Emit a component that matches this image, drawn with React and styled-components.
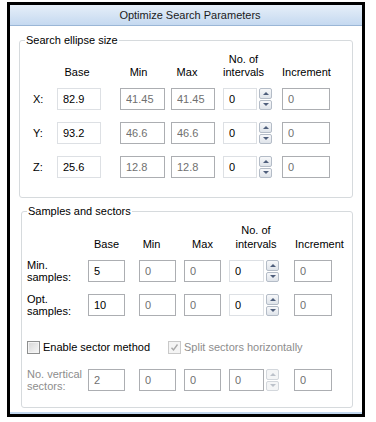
import React from 'react';
import styled, { createGlobalStyle } from 'styled-components';

const GlobalStyle = createGlobalStyle`
  html, body {
    margin: 0;
    padding: 0;
    background: #fff;
  }
  body {
    font-family: 'Liberation Sans', Arial, sans-serif;
    font-size: 11px;
    color: #000;
  }
`;

const Window = styled.div`
  width: 352px;
  margin: 2px 0 0 7px;
  border: 3px solid #000;
  background: #fff;
`;

const TitleBar = styled.div`
  height: 20px;
  display: flex;
  align-items: center;
  justify-content: center;
  padding-left: 8px;
  background: linear-gradient(to bottom, #e6eff9, #c5d9f0);
  border-bottom: 1px solid #9ab6d6;
  color: #1b1b1b;
  font-size: 11px;
`;

const Body = styled.div`
  padding: 8px 9px 4px 9px;
  border-bottom: 2px solid #c2d8f0;
`;

const Group = styled.fieldset`
  margin: ${p => p.$top}px 0 0 ${p => p.$left}px;
  padding: ${p => p.$pt}px 0 ${p => p.$pb}px ${p => p.$pl}px;
  border: 1px solid #d6dadd;
  border-radius: 3px;
  min-width: 0;
`;

const Legend = styled.legend`
  margin-left: ${p => p.$shift}px;
  padding: 0 1px;
  line-height: 13px;
  color: #000;
`;

const Grid = styled.div`
  display: grid;
  grid-template-columns: ${p => p.$cols};
  grid-template-rows: ${p => p.$rows};
  align-items: end;
  justify-items: end;
`;

const Header = styled.div`
  width: ${p => p.$w}px;
  text-align: center;
  line-height: ${p => p.$lh}px;
  margin-right: ${p => p.$shift || 0}px;
`;

const RowLabel = styled.div`
  justify-self: start;
  line-height: 12px;
  margin-bottom: ${p => (p.$two ? -1 : 5)}px;
  color: ${p => (p.$dim ? '#8d8d8d' : '#000')};
`;

const Field = styled.input`
  box-sizing: border-box;
  width: ${p => p.$w}px;
  height: 22px;
  margin: 0;
  padding: 0 0 0 5px;
  border: 1px solid ${p => (p.$light ? '#dde0e4' : '#acaeb2')};
  background: #fff;
  font: 11px 'Liberation Sans', Arial, sans-serif;
  color: ${p => (p.$dim ? '#707070' : '#000')};
  outline: none;
`;

const SpinBox = styled.div`
  display: flex;
  gap: 2px;
`;

const Spin = styled.div`
  display: flex;
  flex-direction: column;
  gap: 1px;
  width: 13px;
  height: 22px;
`;

const SpinButton = styled.div`
  flex: 1;
  box-sizing: border-box;
  border: 1px solid ${p => (p.$off ? '#d3d7dc' : '#b4bcc7')};
  border-radius: 2px;
  background: ${p => (p.$off ? '#f4f5f6' : 'linear-gradient(to bottom, #f7f8fa, #dfe4ea)')};
  display: flex;
  align-items: center;
  justify-content: center;
`;

const Arrow = styled.span`
  width: 0;
  height: 0;
  border-left: 3px solid transparent;
  border-right: 3px solid transparent;
  ${p => (p.$up ? 'border-bottom' : 'border-top')}: 3px solid ${p => (p.$off ? '#bcc2ca' : '#4f5f7c')};
`;

const CheckRow = styled.div`
  grid-column: 1 / -1;
  justify-self: stretch;
  display: grid;
  grid-template-columns: 141px auto;
  align-items: center;
`;

const CheckItem = styled.label`
  display: flex;
  align-items: center;
  gap: 3px;
  line-height: 13px;
  color: ${p => (p.$off ? '#8d8d8d' : '#000')};
`;

const Box = styled.span`
  box-sizing: border-box;
  width: 13px;
  height: 13px;
  border: 1px solid ${p => (p.$off ? '#c9c9c9' : '#8e8f8f')};
  background: ${p => (p.$off ? '#f4f4f4' : 'linear-gradient(135deg, #d6d6d6, #f8f8f8)')};
  box-shadow: inset 0 0 0 1px #f4f4f4;
  display: flex;
  align-items: center;
  justify-content: center;
`;

function Spinner({ value, w, off }) {
  return (
    <SpinBox>
      <Field readOnly value={value} $w={w} $light={!off} $dim={off} />
      <Spin>
        <SpinButton $off={off}><Arrow $up $off={off} /></SpinButton>
        <SpinButton $off={off}><Arrow $off={off} /></SpinButton>
      </Spin>
    </SpinBox>
  );
}

function Check({ label, checked, off }) {
  return (
    <CheckItem $off={off}>
      <Box $off={off}>
        {checked && (
          <svg width="9" height="9" viewBox="0 0 9 9">
            <path d="M1.5 4.8 L3.5 7 L7.5 1.5" fill="none" stroke="#a8a8a8" strokeWidth="1.4" />
          </svg>
        )}
      </Box>
      {label}
    </CheckItem>
  );
}

const ellipse = [
  { axis: 'X:', base: '82.9', min: '41.45', max: '41.45' },
  { axis: 'Y:', base: '93.2', min: '46.6', max: '46.6' },
  { axis: 'Z:', base: '25.6', min: '12.8', max: '12.8' },
];

const samples = [
  { label: ['Min.', 'samples:'], base: '5' },
  { label: ['Opt.', 'samples:'], base: '10' },
];

export default function App() {
  return (
    <>
      <GlobalStyle />
      <Window>
        <TitleBar>Optimize Search Parameters</TitleBar>
        <Body>
          <Group $top={0} $left={0} $pt={6} $pb={19} $pl={13}>
            <Legend $shift={-8}>Search ellipse size</Legend>
            <Grid $cols="24px 44px 64px 50px 57px 58px" $rows="26px 31px 34px 34px">
              <span />
              <Header $w={44} $lh={13} $shift={2}>Base</Header>
              <Header $w={45} $lh={13} $shift={4}>Min</Header>
              <Header $w={44} $lh={13} $shift={6}>Max</Header>
              <Header $w={49} $lh={13} $shift={4}>No. of<br />intervals</Header>
              <Header $w={48} $lh={13}>Increment</Header>
              {ellipse.map(r => (
                <React.Fragment key={r.axis}>
                  <RowLabel>{r.axis}</RowLabel>
                  <Field readOnly value={r.base} $w={44} $light />
                  <Field readOnly value={r.min} $w={45} $dim />
                  <Field readOnly value={r.max} $w={44} $dim />
                  <Spinner value="0" w={34} />
                  <Field readOnly value="0" $w={48} $dim />
                </React.Fragment>
              ))}
            </Grid>
          </Group>

          <Group $top={7} $left={2} $pt={5} $pb={16} $pl={5}>
            <Legend $shift={0}>Samples and sectors</Legend>
            <Grid $cols="61px 37px 51px 45px 58px 53px" $rows="28px 31px 34px 38px 37px">
              <span />
              <Header $w={37} $lh={14}>Base</Header>
              <Header $w={37} $lh={14} $shift={6}>Min</Header>
              <Header $w={37} $lh={14}>Max</Header>
              <Header $w={50} $lh={14} $shift={-2}>No. of<br />intervals</Header>
              <Header $w={38} $lh={14} $shift={-1}>Increment</Header>
              {samples.map(r => (
                <React.Fragment key={r.label[0]}>
                  <RowLabel $two>{r.label[0]}<br />{r.label[1]}</RowLabel>
                  <Field readOnly value={r.base} $w={37} />
                  <Field readOnly value="0" $w={37} $dim />
                  <Field readOnly value="0" $w={37} $dim />
                  <Spinner value="0" w={35} />
                  <Field readOnly value="0" $w={38} $dim />
                </React.Fragment>
              ))}
              <CheckRow>
                <Check label="Enable sector method" />
                <Check label="Split sectors horizontally" checked off />
              </CheckRow>
              <RowLabel $two $dim>No. vertical<br />sectors:</RowLabel>
              <Field readOnly value="2" $w={37} $dim />
              <Field readOnly value="0" $w={37} $dim />
              <Field readOnly value="0" $w={37} $dim />
              <Spinner value="0" w={35} off />
              <Field readOnly value="0" $w={38} $dim />
            </Grid>
          </Group>
        </Body>
      </Window>
    </>
  );
}
